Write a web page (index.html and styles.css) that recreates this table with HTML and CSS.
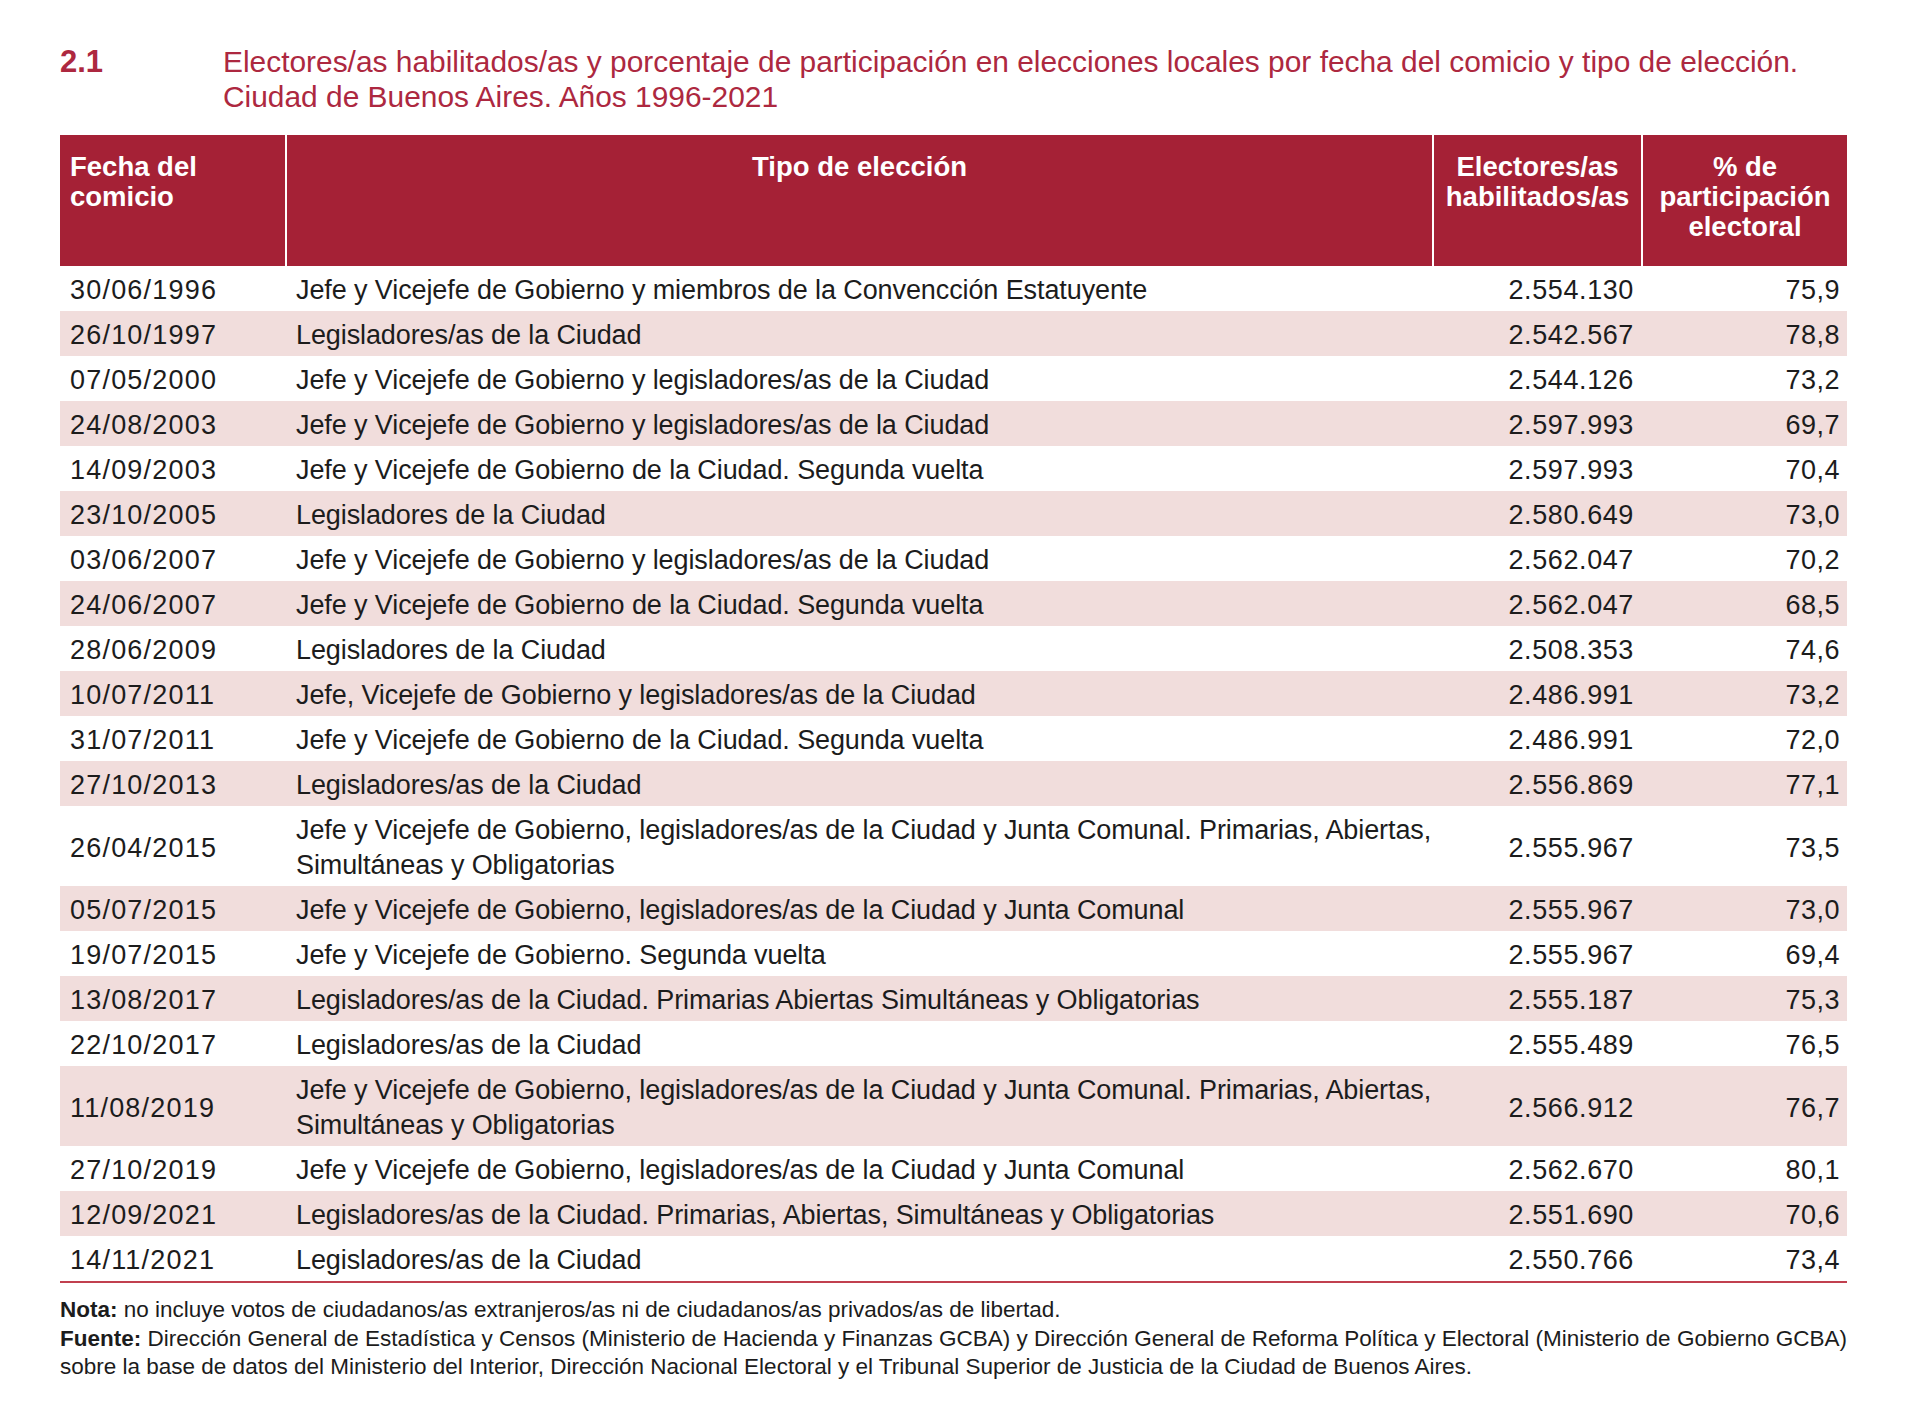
FILE: index.html
```html
<!DOCTYPE html>
<html lang="es">
<head>
<meta charset="utf-8">
<title>Electores/as habilitados/as 1996-2021</title>
<link rel="stylesheet" href="styles.css">
</head>
<body>
<div class="page">
  <div class="title-row">
    <div class="num">2.1</div>
    <h1 class="title">Electores/as habilitados/as y porcentaje de participación en elecciones locales por fecha del comicio y tipo de elección.<br>Ciudad de Buenos Aires. Años 1996-2021</h1>
  </div>
  <table class="data">
    <colgroup><col class="c1"><col class="c2"><col class="c3"><col class="c4"></colgroup>
    <thead>
      <tr>
        <th class="h-left">Fecha del<br>comicio</th>
        <th>Tipo de elección</th>
        <th>Electores/as<br>habilitados/as</th>
        <th>% de<br>participación<br>electoral</th>
      </tr>
    </thead>
    <tbody>
      <tr><td class="date">30/06/1996</td><td class="type">Jefe y Vicejefe de Gobierno y miembros de la Convencción Estatuyente</td><td class="n">2.554.130</td><td class="p">75,9</td></tr>
      <tr><td class="date">26/10/1997</td><td class="type">Legisladores/as de la Ciudad</td><td class="n">2.542.567</td><td class="p">78,8</td></tr>
      <tr><td class="date">07/05/2000</td><td class="type">Jefe y Vicejefe de Gobierno y legisladores/as de la Ciudad</td><td class="n">2.544.126</td><td class="p">73,2</td></tr>
      <tr><td class="date">24/08/2003</td><td class="type">Jefe y Vicejefe de Gobierno y legisladores/as de la Ciudad</td><td class="n">2.597.993</td><td class="p">69,7</td></tr>
      <tr><td class="date">14/09/2003</td><td class="type">Jefe y Vicejefe de Gobierno de la Ciudad. Segunda vuelta</td><td class="n">2.597.993</td><td class="p">70,4</td></tr>
      <tr><td class="date">23/10/2005</td><td class="type">Legisladores de la Ciudad</td><td class="n">2.580.649</td><td class="p">73,0</td></tr>
      <tr><td class="date">03/06/2007</td><td class="type">Jefe y Vicejefe de Gobierno y legisladores/as de la Ciudad</td><td class="n">2.562.047</td><td class="p">70,2</td></tr>
      <tr><td class="date">24/06/2007</td><td class="type">Jefe y Vicejefe de Gobierno de la Ciudad. Segunda vuelta</td><td class="n">2.562.047</td><td class="p">68,5</td></tr>
      <tr><td class="date">28/06/2009</td><td class="type">Legisladores de la Ciudad</td><td class="n">2.508.353</td><td class="p">74,6</td></tr>
      <tr><td class="date">10/07/2011</td><td class="type">Jefe, Vicejefe de Gobierno y legisladores/as de la Ciudad</td><td class="n">2.486.991</td><td class="p">73,2</td></tr>
      <tr><td class="date">31/07/2011</td><td class="type">Jefe y Vicejefe de Gobierno de la Ciudad. Segunda vuelta</td><td class="n">2.486.991</td><td class="p">72,0</td></tr>
      <tr><td class="date">27/10/2013</td><td class="type">Legisladores/as de la Ciudad</td><td class="n">2.556.869</td><td class="p">77,1</td></tr>
      <tr><td class="date">26/04/2015</td><td class="type">Jefe y Vicejefe de Gobierno, legisladores/as de la Ciudad y Junta Comunal. Primarias, Abiertas,<br>Simultáneas y Obligatorias</td><td class="n">2.555.967</td><td class="p">73,5</td></tr>
      <tr><td class="date">05/07/2015</td><td class="type">Jefe y Vicejefe de Gobierno, legisladores/as de la Ciudad y Junta Comunal</td><td class="n">2.555.967</td><td class="p">73,0</td></tr>
      <tr><td class="date">19/07/2015</td><td class="type">Jefe y Vicejefe de Gobierno. Segunda vuelta</td><td class="n">2.555.967</td><td class="p">69,4</td></tr>
      <tr><td class="date">13/08/2017</td><td class="type">Legisladores/as de la Ciudad. Primarias Abiertas Simultáneas y Obligatorias</td><td class="n">2.555.187</td><td class="p">75,3</td></tr>
      <tr><td class="date">22/10/2017</td><td class="type">Legisladores/as de la Ciudad</td><td class="n">2.555.489</td><td class="p">76,5</td></tr>
      <tr><td class="date">11/08/2019</td><td class="type">Jefe y Vicejefe de Gobierno, legisladores/as de la Ciudad y Junta Comunal. Primarias, Abiertas,<br>Simultáneas y Obligatorias</td><td class="n">2.566.912</td><td class="p">76,7</td></tr>
      <tr><td class="date">27/10/2019</td><td class="type">Jefe y Vicejefe de Gobierno, legisladores/as de la Ciudad y Junta Comunal</td><td class="n">2.562.670</td><td class="p">80,1</td></tr>
      <tr><td class="date">12/09/2021</td><td class="type">Legisladores/as de la Ciudad. Primarias, Abiertas, Simultáneas y Obligatorias</td><td class="n">2.551.690</td><td class="p">70,6</td></tr>
      <tr><td class="date">14/11/2021</td><td class="type">Legisladores/as de la Ciudad</td><td class="n">2.550.766</td><td class="p">73,4</td></tr>
    </tbody>
  </table>
  <div class="notes">
    <p><b>Nota:</b> no incluye votos de ciudadanos/as extranjeros/as ni de ciudadanos/as privados/as de libertad.</p>
    <p><b>Fuente:</b> Dirección General de Estadística y Censos (Ministerio de Hacienda y Finanzas GCBA) y Dirección General de Reforma Política y Electoral (Ministerio de Gobierno GCBA)<br>sobre la base de datos del Ministerio del Interior, Dirección Nacional Electoral y el Tribunal Superior de Justicia de la Ciudad de Buenos Aires.</p>
  </div>
</div>
</body>
</html>
```

FILE: styles.css
```css
html, body {
  margin: 0;
  padding: 0;
  background: #ffffff;
}

body {
  font-family: "Liberation Sans", Arial, sans-serif;
  color: #1c1c1c;
}

.page {
  width: 1787px;
  padding: 44px 0 0 60px;
}

.title-row {
  display: flex;
  align-items: flex-start;
  color: #ad2840;
}

.num {
  width: 163px;
  flex: none;
  font-size: 31px;
  font-weight: bold;
  line-height: 35px;
}

.title {
  margin: 0;
  font-size: 29.9px;
  font-weight: normal;
  line-height: 35px;
  white-space: nowrap;
}

.data {
  margin-top: 21px;
  width: 1787px;
  table-layout: fixed;
  border-collapse: collapse;
  border-spacing: 0;
}

.c1 { width: 226px; }
.c2 { width: 1147px; }
.c3 { width: 209px; }
.c4 { width: 205px; }

.data th {
  background: #a52136;
  color: #ffffff;
  font-size: 27.5px;
  font-weight: bold;
  line-height: 30px;
  height: 131px;
  box-sizing: border-box;
  padding: 17px 8px 0;
  vertical-align: top;
  text-align: center;
}

.data th + th {
  border-left: 2px solid #ffffff;
}

.data th.h-left {
  text-align: left;
  padding-left: 10px;
}

.data td {
  font-size: 27px;
  line-height: 35px;
  padding: 7px 10px 3px;
  vertical-align: middle;
  white-space: nowrap;
}

.data td.type {
  letter-spacing: -0.1px;
}

.data tbody tr:nth-child(even) td {
  background: #f1dddc;
}

.data tbody tr:last-child td {
  border-bottom: 2px solid #c1404f;
}

.data td.date {
  letter-spacing: 1.2px;
}

.data td.n {
  text-align: right;
  padding-right: 8px;
  letter-spacing: 0.6px;
}

.data td.p {
  text-align: right;
  padding-right: 7px;
  letter-spacing: 0.5px;
}

.notes {
  margin-top: 13px;
  font-size: 22.5px;
  line-height: 28.5px;
  color: #1c1c1c;
}

.notes p {
  margin: 0;
  white-space: nowrap;
}

.notes b {
  font-weight: bold;
}
```
